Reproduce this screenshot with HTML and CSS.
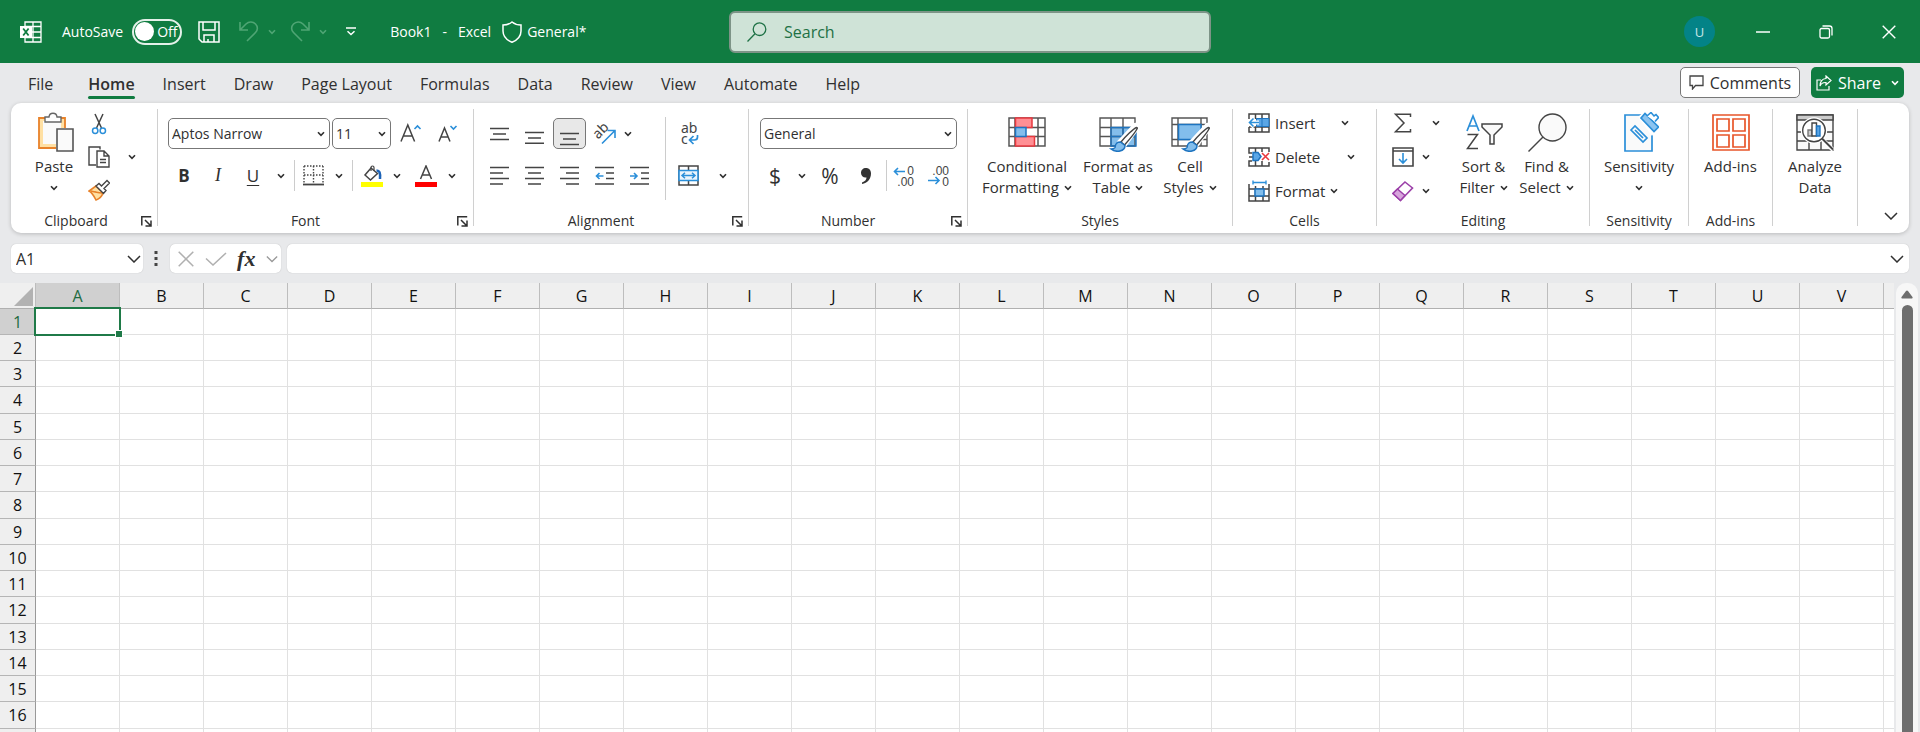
FILE: index.html
```html
<!DOCTYPE html>
<html lang="en">
<head>
<meta charset="utf-8">
<title>Book1 - Excel</title>
<link rel="stylesheet" href="styles.css">
</head>
<body>
<svg class="sprite" aria-hidden="true">
  <symbol id="chev" viewBox="0 0 8 6"><path d="M1 1.2 4 4.4 7 1.2" fill="none" stroke="currentColor" stroke-width="1.6"/></symbol>
  <symbol id="chev-lg" viewBox="0 0 14 8"><path d="M1 1 7 7 13 1" fill="none" stroke="currentColor" stroke-width="1.5"/></symbol>
  <symbol id="launch" viewBox="0 0 11 11"><path d="M.8 9.500V.8H10.200M4 4l5.500 5.500M10 4.500V10H4.500" fill="none" stroke="currentColor" stroke-width="1.5"/></symbol>
</svg>
<div class="app">
  <header class="titlebar">
    <div class="title-left">
      <svg class="excel-logo" viewBox="0 0 22 22" width="22" height="22"><path d="M5 1h16v20H5z" fill="none" stroke="#fff" stroke-width="1.300"/><path d="M13 1v20M5 5.500h16M5 11h16M5 16.500h16" stroke="#fff" stroke-width="1.300"/><path d="M0 5h12v12H0z" fill="#fff"/><path d="m3.200 7.500 5.400 7M8.600 7.500l-5.400 7" stroke="#107c41" stroke-width="1.800"/></svg>
      <label class="autosave"><span>AutoSave</span><input type="checkbox" class="toggle-input"><span class="toggle"><span class="knob"></span>Off</span></label>
      <button class="qat save" aria-label="Save"><svg viewBox="0 0 22 22" width="22" height="22" fill="none" stroke="#fff" stroke-width="1.500"><path d="M1 1h20v20H4l-3-3zM5 1v8h12V1M6 21v-7h10v7M10 18v3"/></svg></button>
      <div class="qat-pair">
        <button class="qat faded" aria-label="Undo"><svg viewBox="0 0 20 21" width="20" height="21" fill="none" stroke="currentColor" stroke-width="1.600"><path d="M1 1v8h8M1.500 8.500 7 3c3-3 7-2.500 9.500 0s2.500 6 0 8.500L8 20"/></svg></button>
        <button class="qat faded" aria-label="Undo history"><svg width="8" height="6"><use href="#chev"/></svg></button>
      </div>
      <div class="qat-pair">
        <button class="qat faded" aria-label="Redo"><svg viewBox="0 0 20 21" width="20" height="21" fill="none" stroke="currentColor" stroke-width="1.600"><path d="M19 1v8h-8M18.500 8.500 13 3C10 0 6 .5 3.500 3s-2.500 6 0 8.500L12 20"/></svg></button>
        <button class="qat faded" aria-label="Redo history"><svg width="8" height="6"><use href="#chev"/></svg></button>
      </div>
      <button class="qat more" aria-label="Customize toolbar"><svg viewBox="0 0 10 9" width="10" height="9" fill="none" stroke="#fff" stroke-width="1.500"><path d="M0 1h10M1.500 4.200 5 7.500l3.500-3.300"/></svg></button>
      <div class="doc-name"><span>Book1</span><span>-</span><span>Excel</span></div>
      <button class="label-btn"><svg viewBox="0 0 20 22" width="20" height="22" fill="none" stroke="#fff" stroke-width="1.500"><path d="M10 1c2.500 2 5.500 3 9 3v6c0 5-3.500 9-9 11.300C4.500 19 1 15 1 10V4c3.500 0 6.500-1 9-3z"/></svg>General*</button>
    </div>
    <label class="search"><svg viewBox="0 0 20 20" width="20" height="20" fill="none" stroke="#1e7145" stroke-width="1.300"><circle cx="12.500" cy="7.200" r="6.300"/><path d="m8 11.800-7.500 7.700"/></svg><input type="search" placeholder="Search" aria-label="Search"></label>
    <div class="window-controls">
      <button class="avatar" aria-label="Account">U</button>
      <button aria-label="Minimize"><svg viewBox="0 0 14 14" width="14" height="14"><path d="M0 7h14" stroke="#fff" stroke-width="1.500"/></svg></button>
      <button aria-label="Restore"><svg viewBox="0 0 14 14" width="14" height="14" fill="none" stroke="#fff" stroke-width="1.300"><rect x="1" y="3.500" width="9.500" height="9.500" rx="1.500"/><path d="M3.500 1h7C12 1 13 2 13 3.500v7"/></svg></button>
      <button aria-label="Close"><svg viewBox="0 0 14 14" width="14" height="14"><path d="m.7.700 12.600 12.600M13.300.700.7 13.300" stroke="#fff" stroke-width="1.400"/></svg></button>
    </div>
  </header>

  <nav class="tabs">
    <a href="#file" class="file">File</a><a href="#home" class="active">Home</a><a href="#insert">Insert</a><a href="#draw">Draw</a><a href="#layout">Page Layout</a><a href="#formulas">Formulas</a><a href="#data">Data</a><a href="#review">Review</a><a href="#view">View</a><a href="#automate">Automate</a><a href="#help">Help</a>
    <div class="tab-actions">
      <button class="comments"><svg viewBox="0 0 15 15" width="15" height="15" fill="none" stroke="#444" stroke-width="1.300"><path d="M1 1h13v9.500H6.500L3.500 14v-3.500H1z"/></svg>Comments</button>
      <button class="share"><svg viewBox="0 0 16 16" width="16" height="16" fill="none" stroke="#fff" stroke-width="1.200"><path d="M5 5H1v10h12v-4"/><path d="M10 1l5 4.500L10 10V7.500C7 7.300 5 8.500 4 11c.1-4 2-7.200 6-7.500z"/></svg>Share<svg width="8" height="6"><use href="#chev"/></svg></button>
    </div>
  </nav>

  <main class="ribbon">
    <section class="group">
      <div class="body clipboard">
        <button class="big paste"><svg viewBox="0 0 40 40" width="40" height="40"><path d="M5 6h26v30H5z" fill="#ffe0a3" stroke="#e8822a" stroke-width="1.800"/><path d="M9 9h18v23H9z" fill="#fafafa"/><path d="M11 10V5h4c.5-5 7.500-5 8 0h4v5z" fill="#fff" stroke="#666" stroke-width="1.400"/><path d="M22 16h18v24H22z" fill="#fff"/><path d="M23 17h16v22H23z" fill="#fafafa" stroke="#555" stroke-width="1.600"/></svg><span>Paste</span><svg width="8" height="6"><use href="#chev"/></svg></button>
        <div class="stack">
          <button aria-label="Cut"><svg viewBox="0 0 22 22" width="22" height="22" fill="none"><path d="M7 1l6.500 14M15 1 8.500 15" stroke="#444" stroke-width="1.500"/><circle cx="7.200" cy="17.800" r="2.700" stroke="#2b8fd9" stroke-width="1.500"/><circle cx="14.800" cy="17.800" r="2.700" stroke="#2b8fd9" stroke-width="1.500"/></svg></button>
          <button aria-label="Copy"><svg viewBox="0 0 22 22" width="22" height="22" fill="none" stroke="#444" stroke-width="1.400"><path d="M12 3.500V1H1v18h7"/><path d="M9 5h7l5 5v11H9zM16 5v5h5M12 13.500h6M12 16.500h6"/></svg></button>
          <button class="lone" aria-label="Copy options"><svg width="8" height="6"><use href="#chev"/></svg></button>
          <button aria-label="Format Painter"><svg viewBox="0 0 22 22" width="22" height="22"><path d="M8 7 1 12c2 1 5 5 7 9 3-1 6-4 7-7z" fill="#ffe0a3" stroke="#e8822a" stroke-width="1.600"/><path d="M3 12c5 1 8 2 11 2" stroke="#e8822a" stroke-width="1.500"/><path d="m8 7 3-2.500 2.500 2.500L19 1.500l2.500 2.500-5.500 5.500 2 2-2.500 3z" fill="#fff" stroke="#444" stroke-width="1.400"/></svg></button>
        </div>
      </div>
      <footer><span>Clipboard</span><button class="launcher" aria-label="Clipboard settings"><svg width="11" height="11"><use href="#launch"/></svg></button></footer>
    </section>

    <section class="group wide">
      <div class="body rows">
        <div class="row font-top">
          <div class="combo"><select aria-label="Font"><option>Aptos Narrow</option></select><svg width="8" height="6"><use href="#chev"/></svg></div>
          <div class="combo"><select aria-label="Font size"><option>11</option></select><svg width="8" height="6"><use href="#chev"/></svg></div>
          <button aria-label="Increase font size"><svg viewBox="0 0 22 22" width="22" height="22" fill="none"><path d="m1 18.500L7.800 2 14.600 18.500M3.500 13h8.600" stroke="#444" stroke-width="1.500"/><path d="m14.500 6 3-3 3 3" stroke="#2b8fd9" stroke-width="1.600"/></svg></button>
          <button aria-label="Decrease font size"><svg viewBox="0 0 22 22" width="22" height="22" fill="none"><path d="m2 18.500L7.500 5 13 18.500M4 14h7" stroke="#444" stroke-width="1.500"/><path d="m13.500 3 3 3 3-3" stroke="#2b8fd9" stroke-width="1.600"/></svg></button>
        </div>
        <div class="row font-bottom">
          <button class="b">B</button><button class="i">I</button><button class="u">U</button>
          <button aria-label="Underline options"><svg width="8" height="6"><use href="#chev"/></svg></button>
          <i class="rule"></i>
          <button aria-label="Borders"><svg viewBox="0 0 21 21" width="21" height="21" stroke="#444"><path d="M1 1h19M1 1v17M20 1v17M10.500 1v17M1 10h19" stroke-width="1.400" stroke-dasharray="1.500 1.500"/><path d="M0 19.500h21" stroke-width="1.800"/></svg></button>
          <button aria-label="Border options"><svg width="8" height="6"><use href="#chev"/></svg></button>
          <i class="rule"></i>
          <button aria-label="Fill color"><svg viewBox="0 0 22 22" width="22" height="22"><path d="m10 3 6.500 5.500-7 6.500-5.500-5z" fill="#fff" stroke="#444" stroke-width="1.500"/><path d="M10 6V2.500c0-2 3-2 3 0V6" fill="none" stroke="#444" stroke-width="1.200"/><path d="M15.500 5.500c3 0 4 2 3.500 8.500" fill="none" stroke="#1c63b7" stroke-width="2.500"/><path d="M0 17h22v5H0z" fill="#ff0"/></svg></button>
          <button aria-label="Fill options"><svg width="8" height="6"><use href="#chev"/></svg></button>
          <button aria-label="Font color"><svg viewBox="0 0 22 22" width="22" height="22"><path d="M5.500 14 11 1l5.500 13M7.500 10h7" fill="none" stroke="#444" stroke-width="1.500"/><path d="M0 17h22v5H0z" fill="red"/></svg></button>
          <button aria-label="Font color options"><svg width="8" height="6"><use href="#chev"/></svg></button>
        </div>
      </div>
      <footer><span>Font</span><button class="launcher" aria-label="Font settings"><svg width="11" height="11"><use href="#launch"/></svg></button></footer>
    </section>

    <section class="group wide">
      <div class="body alignment">
        <div class="rows">
          <div class="row align-row orient-row">
            <button aria-label="Top align"><svg viewBox="0 0 20 20" width="20" height="20" stroke="#444" stroke-width="1.500"><path d="M0 4.500h19M3 10h13M0 15.500h19"/></svg></button>
            <button aria-label="Middle align"><svg viewBox="0 0 20 20" width="20" height="20" stroke="#444" stroke-width="1.500"><path d="M0 8.500h19M3 14h13M0 19.200h19"/></svg></button>
            <button class="pressed" aria-label="Bottom align"><svg viewBox="0 0 20 24" width="20" height="24" stroke="#444" stroke-width="1.500"><path d="M0 11.500h19M3 17h13M0 22.500h19"/></svg></button>
            <button aria-label="Orientation"><svg class="spill" viewBox="0 0 22 22" width="22" height="22"><text x="7" y="12" text-anchor="middle" transform="rotate(-45 7 8)" class="svg-ab">ab</text><path d="M8 20.500 20.500 8M13.500 7.500h7.500v7.500" fill="none" stroke="#2b8fd9" stroke-width="1.600"/></svg></button>
            <button aria-label="Orientation options"><svg width="8" height="6"><use href="#chev"/></svg></button>
          </div>
          <div class="row align-row">
            <button aria-label="Align left"><svg viewBox="0 0 20 20" width="20" height="20" stroke="#444" stroke-width="1.600"><path d="M0 1.500h19M0 7h13M0 12.500h19M0 18h13"/></svg></button>
            <button aria-label="Center"><svg viewBox="0 0 20 20" width="20" height="20" stroke="#444" stroke-width="1.600"><path d="M0 1.500h19M3 7h13M0 12.500h19M3 18h13"/></svg></button>
            <button aria-label="Align right"><svg viewBox="0 0 20 20" width="20" height="20" stroke="#444" stroke-width="1.600"><path d="M0 1.500h19M6 7h13M0 12.500h19M6 18h13"/></svg></button>
            <button aria-label="Decrease indent"><svg viewBox="0 0 20 20" width="20" height="20" fill="none" stroke="#444" stroke-width="1.600"><path d="M0 1.500h19M11 7h8M11 12.500h8M0 18h19"/><path d="M8.500 10H1.500M4.500 7l-3 3 3 3" stroke="#2b8fd9"/></svg></button>
            <button aria-label="Increase indent"><svg viewBox="0 0 20 20" width="20" height="20" fill="none" stroke="#444" stroke-width="1.600"><path d="M0 1.500h19M11 7h8M11 12.500h8M0 18h19"/><path d="M0 10h7M4 7l3 3-3 3" stroke="#2b8fd9"/></svg></button>
          </div>
        </div>
        <i class="rule tall"></i>
        <div class="rows">
          <div class="row wrap-row"><button aria-label="Wrap text"><svg class="spill" viewBox="0 0 22 24" width="22" height="24"><text x="4" y="11" class="svg-ab">ab</text><text x="4" y="22" class="svg-ab">c</text><path d="M20.500 13v2c0 2-1 3-3 3h-5M16.500 14 12.500 18l4 4" fill="none" stroke="#2b8fd9" stroke-width="1.700"/></svg></button></div>
          <div class="row wrap-row"><button aria-label="Merge and center"><svg viewBox="0 0 21 21" width="21" height="21" fill="none"><path d="M1 1h19v19H1zM10.500 1v19" stroke="#444" stroke-width="1.500"/><path d="M1 5.500h19v10H1z" fill="#eaf4fc" stroke="#2b8fd9" stroke-width="1.600"/><path d="M4 10.500h13M7 7.700l-3 2.800 3 2.800M14 7.700l3 2.800-3 2.800" stroke="#2b8fd9" stroke-width="1.500"/></svg></button><button aria-label="Merge options"><svg width="8" height="6"><use href="#chev"/></svg></button></div>
        </div>
      </div>
      <footer><span>Alignment</span><button class="launcher" aria-label="Alignment settings"><svg width="11" height="11"><use href="#launch"/></svg></button></footer>
    </section>

    <section class="group wide">
      <div class="body rows">
        <div class="row num-top"><div class="combo"><select aria-label="Number format"><option>General</option></select><svg width="8" height="6"><use href="#chev"/></svg></div></div>
        <div class="row num-bottom">
          <button class="sym">$</button><button aria-label="Currency options"><svg width="8" height="6"><use href="#chev"/></svg></button>
          <button class="sym">%</button>
          <button aria-label="Comma style"><svg viewBox="0 0 12 18" width="12" height="18"><path d="M6 1c3 0 5 2.200 5 5.500C11 12 7.500 16 2 17v-1.500c3-1 4.500-3 4.500-5C3.500 11 1 9 1 6s2-5 5-5z" fill="#333"/></svg></button>
          <i class="rule"></i>
          <button aria-label="Increase decimal"><svg class="spill" viewBox="0 0 22 22" width="22" height="22"><text x="21" y="10" text-anchor="end" class="svg-num">0</text><text x="21" y="21" text-anchor="end" class="svg-num">.00</text><path d="M12 6.500H1.500M5 3 1.500 6.500 5 10" fill="none" stroke="#2b8fd9" stroke-width="1.600"/></svg></button>
          <button aria-label="Decrease decimal"><svg class="spill" viewBox="0 0 22 22" width="22" height="22"><text x="21" y="10" text-anchor="end" class="svg-num">.00</text><text x="21" y="21" text-anchor="end" class="svg-num">0</text><path d="M0 15.500h11M7.500 12l3.500 3.500L7.500 19" fill="none" stroke="#2b8fd9" stroke-width="1.600"/></svg></button>
        </div>
      </div>
      <footer><span>Number</span><button class="launcher" aria-label="Number settings"><svg width="11" height="11"><use href="#launch"/></svg></button></footer>
    </section>

    <section class="group">
      <div class="body styles">
        <button class="big"><svg viewBox="0 0 40 40" width="40" height="40" fill="none"><path d="M2 6h36v28H2zM8 6v28M31 6v28M2 15.500h36M2 24.500h36" stroke="#555" stroke-width="1.500"/><path d="M8.500 6h16.500v9.500H8.500zM8.500 24.500h19v9.500h-19z" fill="#ff8f94" stroke="#e8393f" stroke-width="1.500"/><path d="M8.500 15.500h10.500v9H8.500z" fill="#83beec" stroke="#1e74c0" stroke-width="1.500"/></svg><span>Conditional</span><span>Formatting <svg width="8" height="6"><use href="#chev"/></svg></span></button>
        <button class="big"><svg viewBox="0 0 40 40" width="40" height="40" fill="none"><path d="M2 6h35v28H2z" fill="#fff"/><path d="M13 15.500h25v18.500H13z" fill="#83beec"/><path d="M2 6h35v28H2zM13 6v28M25 6v28M2 15.500h35M2 24.500h35" stroke="#555" stroke-width="1.400"/><path d="M13 15.500h25v18.500H13zM25 15.500v18.500M13 24.500h25" stroke="#1e74c0" stroke-width="1.400"/><path d="M37 13c3-1 4 0 3 2L27 33l-5-4z" fill="#fff" stroke="#fff" stroke-width="4"/><path d="M38.500 15.500C36 16 27 25 23 30l3.500 3C31 28 38 19.500 39.500 16z" fill="#fff" stroke="#444" stroke-width="1.400"/><path d="M22.500 30c-5 0-5 3-5.500 5.500-.5 1-2.500 1.500-4 1.500 5 4 14 2.500 14-3.500z" fill="#83beec" stroke="#1e74c0" stroke-width="1.500"/></svg><span>Format as</span><span>Table <svg width="8" height="6"><use href="#chev"/></svg></span></button>
        <button class="big"><svg viewBox="0 0 40 40" width="40" height="40" fill="none"><path d="M2 6h35v28H2zM8 6v28M31 6v28M2 12.500h35M2 27.500h35" stroke="#555" stroke-width="1.400"/><path d="M8.500 12.500h22.500v15H8.500z" fill="#83beec" stroke="#1e74c0" stroke-width="1.500"/><path d="M37 13c3-1 4 0 3 2L27 33l-5-4z" fill="#fff" stroke="#fff" stroke-width="4"/><path d="M38.500 15.500C36 16 27 25 23 30l3.500 3C31 28 38 19.500 39.500 16z" fill="#fff" stroke="#444" stroke-width="1.400"/><path d="M22.500 30c-5 0-5 3-5.500 5.500-.5 1-2.500 1.500-4 1.500 5 4 14 2.500 14-3.500z" fill="#83beec" stroke="#1e74c0" stroke-width="1.500"/></svg><span>Cell</span><span>Styles <svg width="8" height="6"><use href="#chev"/></svg></span></button>
      </div>
      <footer><span>Styles</span></footer>
    </section>

    <section class="group">
      <div class="body cells">
        <div class="cell-cmd insert"><button><svg viewBox="0 0 22 20" width="22" height="20" fill="none"><path d="M1 6V1h20v18H1v-5M7.500 1v5M14 1v18M7.500 14v5M1 14h20M8 6h13" stroke="#444" stroke-width="1.500"/><path d="M8.500 5.500H21v8H8.500z" fill="#5aa6e6" stroke="#1e74c0"/><path d="M14 5.500v8" stroke="#1e74c0"/><path d="M11 9.500H1.500M6 5 1.500 9.500 6 14" stroke="#fff" stroke-width="4"/><path d="M11 9.500H1.500M5.500 5.500l-4 4 4 4" stroke="#2b8fd9" stroke-width="1.600"/></svg>Insert</button><button aria-label="Insert options"><svg width="8" height="6"><use href="#chev"/></svg></button></div>
        <div class="cell-cmd delete"><button><svg viewBox="0 0 22 20" width="22" height="20" fill="none"><path d="M4 6H1V1h20v4M7.500 1v4M14 1v4M4 14H1v5h20v-4M7.500 14v5M14 14v5M1 10h4" stroke="#444" stroke-width="1.500"/><path d="M5 5.500h5l3 4-3 4H5z" fill="#5aa6e6" stroke="#1e74c0" stroke-width="1.500"/><path d="m14 6 7 7M21 6l-7 7" stroke="#e8393f" stroke-width="1.600"/></svg>Delete</button><button aria-label="Delete options"><svg width="8" height="6"><use href="#chev"/></svg></button></div>
        <div class="cell-cmd format"><button><svg viewBox="0 0 22 22" width="22" height="22" fill="none"><path d="M1 4v17h20V4M1 9h20M1 16h20M7.500 6v15M15 6v15" stroke="#444" stroke-width="1.500"/><path d="M7 9h9v7H7z" fill="#83beec" stroke="#1e74c0" stroke-width="1.500"/><path d="M5 2.500h13M5 .500v4M18 .500v4" stroke="#2b8fd9" stroke-width="1.400"/></svg>Format <svg width="8" height="6"><use href="#chev"/></svg></button></div>
      </div>
      <footer><span>Cells</span></footer>
    </section>

    <section class="group">
      <div class="body editing">
        <div class="edit-stack">
          <div class="edit-cmd sum"><button aria-label="AutoSum"><svg viewBox="0 0 22 20" width="22" height="20"><path d="M18.500 4V1.200H3.500L12 10l-8.500 8.800h15V16" fill="none" stroke="#444" stroke-width="1.500"/></svg></button><button aria-label="AutoSum options"><svg width="8" height="6"><use href="#chev"/></svg></button></div>
          <div class="edit-cmd"><button aria-label="Fill"><svg viewBox="0 0 22 20" width="22" height="20" fill="none"><path d="M1 1h20v18H1zM1 4h20" stroke="#444" stroke-width="1.600"/><path d="M11 6v10M7 12l4 4 4-4" stroke="#2b8fd9" stroke-width="1.600"/></svg></button><button aria-label="Fill options"><svg width="8" height="6"><use href="#chev"/></svg></button></div>
          <div class="edit-cmd"><button aria-label="Clear"><svg viewBox="0 0 22 22" width="22" height="22"><path d="M13 2l7.500 6L8.500 20.500 1 13.500z" fill="#fff" stroke="#9b3fa8" stroke-width="1.600"/><path d="m5.500 9 7.500 6.500-4.500 5L1 13.500z" fill="#d7a5dc" stroke="#9b3fa8" stroke-width="1.500"/></svg></button><button aria-label="Clear options"><svg width="8" height="6"><use href="#chev"/></svg></button></div>
        </div>
        <button class="big"><svg viewBox="0 0 40 40" width="40" height="40" fill="none"><path d="M3 19 9 4l6 15M5 14h8" stroke="#2b8fd9" stroke-width="1.700"/><path d="M3.500 22.500h10L3.500 36.500h10.500" stroke="#444" stroke-width="1.500"/><path d="M18 12h20v3l-8 8v9h-4v-9l-8-8z" stroke="#444" fill="#fafafa" stroke-width="1.500"/></svg><span>Sort &amp;</span><span>Filter <svg width="8" height="6"><use href="#chev"/></svg></span></button>
        <button class="big"><svg viewBox="0 0 40 40" width="40" height="40" fill="#fafafa" stroke="#444" stroke-width="1.400"><circle cx="25.500" cy="15.500" r="13.500"/><path d="M16 25 1.500 39.500"/></svg><span>Find &amp;</span><span>Select <svg width="8" height="6"><use href="#chev"/></svg></span></button>
      </div>
      <footer><span>Editing</span></footer>
    </section>

    <section class="group">
      <div class="body single">
        <button class="big"><svg viewBox="0 0 40 40" width="40" height="40" fill="none"><path d="M6 3h27v36H6z" fill="#fafafa" stroke="#2b8fd9" stroke-width="1.700"/><path d="M19 5 28-3h15v12L33 24z" fill="#fff"/><path d="m12 18 4-4 12 12-4 4zM16 18l8 8" stroke="#2b8fd9" stroke-width="1.700"/><path d="m22 6 4-4.500L39.500 15l-4.500 4.500z" fill="#8cc4f0" stroke="#2b8fd9" stroke-width="1.700"/><path d="m28 4 4-3.500 3 3.500 2-1.500 2.500 3-3.500 4" fill="#fff" stroke="#2b8fd9" stroke-width="1.600"/></svg><span>Sensitivity</span><svg width="8" height="6"><use href="#chev"/></svg></button>
      </div>
      <footer><span>Sensitivity</span></footer>
    </section>
    <section class="group">
      <div class="body single">
        <button class="big"><svg viewBox="0 0 40 40" width="40" height="40" fill="none" stroke="#e8562a" stroke-width="1.700"><path d="M2 3h36v35H2zM6 7h12v12H6zM22 7h12v12H22zM6 23h12v12H6zM22 23h12v12H22z"/></svg><span>Add-ins</span></button>
      </div>
      <footer><span>Add-ins</span></footer>
    </section>
    <section class="group">
      <div class="body single">
        <button class="big"><svg viewBox="0 0 40 40" width="40" height="40" fill="none" stroke="#444" stroke-width="1.400"><path d="M2 3h36v35H2z" fill="#fafafa"/><path d="M2 3h36v5H2z" fill="#ccc"/><path d="M2 20h36M2 29h36M14 29v9M26 29v9"/><circle cx="19" cy="18.500" r="12.500" fill="#fff" stroke="#fff"/><path d="m27 27 11 11" stroke="#fff" stroke-width="4"/><circle cx="19" cy="18.500" r="11.300" fill="#fff"/><path d="m27 26.500 11 11" stroke-width="2"/><path d="M13 18h4v6h-4z" fill="#ccc" stroke="#777"/><path d="M17 11h4.500v13H17z" fill="#fff"/><path d="M21.500 14h3.500v10h-3.500z" fill="#5aa6e6" stroke="#1e74c0"/></svg><span>Analyze</span><span>Data</span></button>
      </div>
    </section>
    <button class="collapse" aria-label="Collapse ribbon"><svg width="14" height="8"><use href="#chev-lg"/></svg></button>
  </main>

  <div class="formula-bar">
    <div class="name-box"><input type="text" value="A1" aria-label="Name box"><button aria-label="Names"><svg width="14" height="8"><use href="#chev-lg"/></svg></button></div>
    <svg class="dots" viewBox="0 0 4 15" width="4" height="15" fill="#444"><path d="M.5 0h3v3h-3zM.5 6h3v3h-3zM.5 12h3v3h-3z"/></svg>
    <div class="fx-box">
      <button aria-label="Cancel"><svg viewBox="0 0 16 16" width="16" height="16"><path d="m.7.700 14.600 14.600M15.300.700.7 15.300" stroke="#b0b0b0" stroke-width="1.500"/></svg></button>
      <button aria-label="Enter"><svg viewBox="0 0 22 14" width="22" height="14"><path d="m1 6.500 7 6.500L21 1" fill="none" stroke="#b0b0b0" stroke-width="1.500"/></svg></button>
      <button class="fx">fx</button>
      <button class="dim" aria-label="Functions"><svg width="12" height="8"><use href="#chev-lg"/></svg></button>
    </div>
    <div class="formula"><input type="text" aria-label="Formula"><button aria-label="Expand"><svg width="14" height="8"><use href="#chev-lg"/></svg></button></div>
  </div>

  <div class="sheet">
    <div class="grid-wrap"><table class="grid" id="grid"></table></div>
    <div class="scroll">
      <svg viewBox="0 0 12 9" width="12" height="9"><path d="M5 1c.5-.7 1.500-.700 2 0l4.500 6c.4.800 0 1.500-1 1.500h-9c-1 0-1.400-.700-1-1.500z" fill="#6e6e6e"/></svg>
      <div class="thumb"></div>
    </div>
  </div>
</div>
<script src="grid.js"></script>
</body>
</html>
```
FILE: styles.css
```css
* { box-sizing: border-box; }
body { margin: 0; background: #e8e9eb; font-family: "Open Sans", "Noto Sans", sans-serif; font-size: 15px; color: #303030; overflow: hidden; }
button { font: inherit; color: inherit; background: none; border: 0; padding: 0; display: flex; align-items: center; justify-content: center; }
input, select { font: inherit; color: inherit; border: 0; outline: 0; background: none; padding: 0; min-width: 0; }
svg { display: block; flex: none; }
.sprite { display: none; }
.spill { overflow: visible; }
.app { height: 100vh; display: flex; flex-direction: column; }

.titlebar { flex: none; height: 63px; background: #107c41; color: #fff; display: grid; grid-template-columns: 1fr 482px 1fr; align-items: center; padding-left: 20px; font-size: 14px; }
.title-left { display: flex; align-items: center; white-space: nowrap; }
.autosave { display: flex; align-items: center; gap: 9px; margin-left: 20px; position: relative; }
.toggle-input { position: absolute; right: 0; opacity: 0; }
.toggle { width: 50px; height: 26px; border: 2px solid #e4f1e9; border-radius: 13px; display: flex; align-items: center; gap: 3px; padding-left: 1px; }
.knob { width: 19px; height: 19px; border-radius: 50%; background: #fff; }
.qat { height: 30px; }
.save { margin: 0 19px 0 16px; }
.qat-pair { display: flex; gap: 9px; margin-right: 14px; }
.faded { color: #4fa574; }
.more { margin: 0 34px 0 5px; }
.doc-name { display: flex; gap: 11px; }
.label-btn { gap: 5px; margin-left: 11px; }
.search { height: 42px; background: #cfe3d7; border: 2px solid #7d9487; border-radius: 6px; display: flex; align-items: center; gap: 17px; padding: 0 16px; color: #1e7145; font-size: 16px; }
.search input { flex: 1; }
.search input::placeholder { color: #1e7145; opacity: 1; }
.window-controls { display: flex; justify-content: flex-end; align-items: center; }
.window-controls button { width: 63px; height: 40px; }
.window-controls .avatar { width: 31px; height: 31px; border-radius: 50%; background: #038387; font-size: 13px; margin-right: 16px; color: #c9e6e7; }

.tabs { flex: none; height: 40px; display: flex; padding-left: 14px; font-size: 16px; }
.tabs a { color: #303030; text-decoration: none; padding: 0 14px; height: 36px; line-height: 42px; position: relative; }
.tabs .file { margin-right: 7px; }
.tabs .active { font-weight: 600; }
.tabs .active::after { content: ""; position: absolute; left: 14px; right: 14px; bottom: 0; height: 3px; border-radius: 2px; background: #107c41; }
.tab-actions { margin-left: auto; display: flex; gap: 11px; padding: 4px 16px 0 0; }
.comments, .share { height: 31px; border-radius: 5px; gap: 6px; }
.comments { width: 120px; background: #fff; border: 1px solid #777; }
.share { width: 93px; background: #107c41; color: #fff; }
.share svg:last-child { margin-left: 4px; }

.ribbon { flex: none; height: 130px; margin: 0 11px; background: #fff; border-radius: 10px; box-shadow: 0 1px 4px #0003; display: grid; grid-template-columns: 147px 316px 275px 219px 265px 144px 213px 99px 84px 85px 1fr; padding: 6px 0 7px; }
.group { border-right: 1px solid #d0d0d0; display: flex; flex-direction: column; min-width: 0; }
.body { flex: 1; min-height: 0; display: flex; }
.group footer { flex: none; height: 10px; display: flex; align-items: center; line-height: 10px; font-size: 14px; }
.group footer span { flex: 1; text-align: center; }
.wide footer span { padding-right: 4px; }
.launcher { width: 16px; justify-content: flex-start; }
.rows { display: flex; flex-direction: column; gap: 11px; padding-top: 9px; }
.row { display: grid; height: 31px; align-items: center; justify-items: center; }
.rule { width: 1px; height: 31px; background: #ccc; }
.rule.tall { height: 83px; margin-top: 8px; }
.combo { width: 100%; height: 31px; border: 1px solid #777; border-radius: 5px; display: grid; align-items: center; }
.combo select { appearance: none; grid-area: 1 / 1; padding-left: 3px; width: 100%; height: 29px; font-size: 14px; }
.combo svg { grid-area: 1 / 1; justify-self: end; margin-right: 4px; pointer-events: none; }
.big { flex-direction: column; justify-content: flex-start; padding-top: 3px; line-height: 21px; white-space: nowrap; }
.big > svg:first-child { margin-bottom: 4px; }
.big > span { display: flex; align-items: center; gap: 5px; }
.big > span + svg { margin-top: 8px; }

.clipboard { padding-left: 23px; }
.paste { width: 40px; }
.stack { display: grid; grid-template-columns: 30px 36px; grid-template-rows: repeat(3, 30px); row-gap: 3px; margin-left: 10px; }
.stack button { grid-column: 1; }
.stack .lone { grid-column: 2; grid-row: 2; }
.stack > :last-child { grid-row: 3; }
.font-top { grid-template-columns: 162px 59px 36px 34px; column-gap: 2px; padding-left: 10px; justify-content: start; }
.font-bottom { grid-template-columns: 32px 36px 34px 22px 4px 34px 18px 8px 31px 20px 38px 14px; padding-left: 10px; justify-content: start; }
.b { font-weight: 700; font-size: 17px; }
.i { font-style: italic; font-size: 18px; font-family: "Liberation Serif", serif; }
.u { text-decoration: underline; text-underline-offset: 3px; font-size: 17px; }
.alignment { padding-left: 8px; }
.align-row { grid-template-columns: repeat(5, 35px); }
.orient-row { grid-template-columns: repeat(4, 35px) 12px; }
.pressed { width: 33px; height: 31px; border: 1px solid #777; border-radius: 5px; background: #e8e8e8; }
.alignment .rule { margin-left: 8px; }
.wrap-row { grid-template-columns: 44px 24px; justify-content: space-between; width: 69px; }
.svg-ab { font-family: "Noto Sans", sans-serif; font-size: 14px; fill: #444; }
.svg-num { font-family: "Liberation Sans", sans-serif; font-size: 12px; fill: #444; }
.num-top { padding: 0 10px 0 11px; }
.num-bottom { grid-template-columns: 32px 22px 34px 38px 2px 34px 36px; justify-content: start; padding-left: 10px; }
.sym { font-size: 21px; }
.styles { padding-left: 13px; }
.styles .big:nth-child(1) { width: 92px; }
.styles .big:nth-child(2) { width: 90px; }
.styles .big:nth-child(3) { width: 54px; }
.cells { flex-direction: column; gap: 4px; padding-left: 15px; }
.cell-cmd { height: 30px; display: flex; justify-content: space-between; align-items: center; font-size: 15px; }
.cell-cmd button { gap: 5px; }
.cells, .edit-stack { margin-top: -1px; }
.insert { width: 101px; }
.delete { width: 107px; }
.edit-stack { display: flex; flex-direction: column; gap: 4px; width: 60px; }
.editing { padding-left: 15px; }
.edit-cmd { height: 30px; display: flex; align-items: center; gap: 8px; }
.sum { gap: 18px; }
.editing .big { width: 63px; }
.single { justify-content: center; }
.collapse { align-self: end; height: 20px; justify-self: center; margin-left: 14px; }

.formula-bar { flex: none; height: 50px; display: flex; align-items: flex-start; padding: 11px 11px 0; }
.name-box, .fx-box, .formula { height: 29px; background: #fff; border-radius: 5px; display: flex; align-items: center; box-shadow: 0 0 1px #0004; }
.name-box { width: 132px; padding: 0 2px 0 5px; font-size: 16px; }
.name-box input, .formula input { flex: 1; width: 0; }
.dots { margin: 7px 12px 0 11px; }
.fx-box { width: 111px; justify-content: space-between; padding: 0 3px 0 8px; margin-right: 6px; }
.fx { font-family: "Liberation Serif", serif; font-style: italic; font-weight: 700; font-size: 22px; line-height: 22px; }
.dim { color: #999; }
.formula { flex: 1; padding: 0 5px; }

.sheet { flex: 1; min-height: 0; display: flex; }
.grid-wrap { flex: 1; min-width: 0; overflow: hidden; background: #fff; }
.grid { table-layout: fixed; width: 1968px; border-collapse: separate; border-spacing: 0; font-size: 16px; color: #111; }
.grid th, .grid td { padding: 0; height: 26px; border-right: 1px solid #e1e1e1; border-bottom: 1px solid #e1e1e1; line-height: 20px; width: 84px; }
.grid th { background: #efefef; font-weight: 400; }
.grid thead th { border-right-color: #bdbdbd; border-bottom-color: #b0b0b0; }
.grid tbody th { border-right-color: #999; border-bottom-color: #b5b5b5; }
.grid tr > :first-child { width: 36px; }
.grid tbody tr:nth-child(4n) > * { height: 27px; }
.grid .on { background: #d0d0d0; color: #1e6b41; }
.corner svg { margin: 2px 0 0 14px; }
.grid .cursor { position: relative; }
.cursor::before { content: ""; position: absolute; inset: -2px; border: 2px solid #1f7a48; }
.cursor::after { content: ""; position: absolute; right: -3px; bottom: -3px; width: 6px; height: 6px; background: #1f7a48; outline: 1px solid #fff; }
.scroll { flex: none; width: 22px; margin: 0 2px; background: #f7f7f7; border-radius: 10px 10px 0 0; display: flex; flex-direction: column; align-items: center; padding-top: 7px; gap: 6px; }
.thumb { flex: 1; width: 11px; background: #6e6e6e; border-radius: 6px 6px 0 0; }
```
FILE: grid.js
```js
const columns = [..."ABCDEFGHIJKLMNOPQRSTUV", ""];
const rowCount = 16;
const corner = '<th class="corner"><svg viewBox="0 0 20 20" width="20" height="20"><path d="M19 0v19H0z" fill="#b2b2b2"/></svg></th>';

const head = columns.map((c) => `<th class="${c === "A" ? "on" : ""}">${c}</th>`).join("");
let body = "";
for (let r = 1; r <= rowCount + 1; r++) {
  const label = r <= rowCount ? r : "";
  const cells = columns.map((c) => (r === 1 && c === "A" ? '<td class="cursor"></td>' : "<td></td>")).join("");
  body += `<tr><th class="${r === 1 ? "on" : ""}">${label}</th>${cells}</tr>`;
}
document.getElementById("grid").innerHTML = `<thead><tr>${corner}${head}</tr></thead><tbody>${body}</tbody>`;
```
